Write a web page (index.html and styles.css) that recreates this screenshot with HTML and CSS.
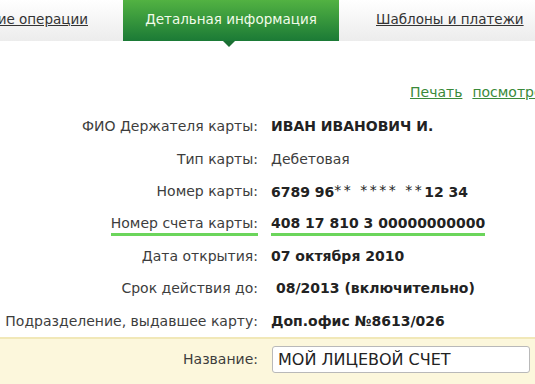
FILE: index.html
```html
<!DOCTYPE html>
<html lang="ru">
<head>
  <meta charset="UTF-8">
  <title>Детальная информация</title>
  <link rel="stylesheet" href="styles.css">
</head>
<body>

  <!-- Вкладки -->
  <div class="tabs">
    <div class="tab tab-first"><a href="#">Последние операции</a></div>
    <div class="tab tab-active">Детальная информация</div>
    <div class="tab tab-last"><a href="#">Шаблоны и платежи</a></div>
  </div>

  <!-- Ссылки -->
  <div class="links">
    <a href="#">Печать</a>
    <a href="#">посмотреть</a>
  </div>

  <!-- Данные карты -->
  <div class="info">
    <div class="label">ФИО Держателя карты:</div>
    <div class="value">ИВАН ИВАНОВИЧ И.</div>

    <div class="label">Тип карты:</div>
    <div class="value plain">Дебетовая</div>

    <div class="label">Номер карты:</div>
    <div class="value">6789 96<span class="stars">** **** **</span>12 34</div>

    <div class="label"><span class="mark">Номер счета карты:</span></div>
    <div class="value"><span class="mark">408 17 810 3 00000000000</span></div>

    <div class="label">Дата открытия:</div>
    <div class="value">07 октября 2010</div>

    <div class="label">Срок действия до:</div>
    <div class="value shift">08/2013 (включительно)</div>

    <div class="label">Подразделение, выдавшее карту:</div>
    <div class="value">Доп.офис №8613/026</div>
  </div>

  <!-- Название -->
  <div class="name-row">
    <label class="name-label" for="name">Название:</label>
    <input class="name-input" id="name" type="text" value="МОЙ ЛИЦЕВОЙ СЧЕТ">
  </div>

</body>
</html>
```

FILE: styles.css
```css
html, body {
  margin: 0;
  padding: 0;
  background: #fff;
  font-family: 'DejaVu Sans', Verdana, sans-serif;
  color: #3d3d3d;
  overflow: hidden;
}

a {
  color: inherit;
}

/* Вкладки */
.tabs {
  display: flex;
  height: 41px;
  background: linear-gradient(to bottom, #ffffff, #ececec);
  font-size: 13.5px;
}

.tab {
  display: flex;
  align-items: center;
  padding-bottom: 4px;
  white-space: nowrap;
}

.tab a {
  color: #333;
}

.tab-first {
  width: 88px;
  justify-content: flex-end;
  margin-right: 35px;
}

.tab-active {
  position: relative;
  width: 216px;
  justify-content: center;
  color: #f2fbe9;
  background: linear-gradient(to bottom, #52b242, #1b7a36);
}

.tab-active::after {
  content: "";
  position: absolute;
  left: 100px;
  bottom: -6px;
  border-left: 6px solid transparent;
  border-right: 6px solid transparent;
  border-top: 6px solid #1b6f33;
}

.tab-last {
  margin-left: 37px;
}

/* Ссылки */
.links {
  display: flex;
  justify-content: flex-end;
  gap: 10px;
  margin: 43px -24px 0 0;
  font-size: 14px;
  color: #3a8a3a;
  white-space: nowrap;
}

/* Данные карты */
.info {
  display: grid;
  grid-template-columns: 258px auto;
  column-gap: 13px;
  grid-auto-rows: 32.4px;
  align-items: center;
  margin-top: 10px;
  font-size: 14px;
}

.label {
  text-align: right;
  white-space: nowrap;
}

.value {
  font-weight: bold;
  color: #222;
  white-space: nowrap;
  font-size: 14px;
}

.value.plain {
  font-weight: normal;
  color: #3d3d3d;
}

.value.shift {
  padding-left: 5px;
}

.stars {
  font-size: 14px;
  font-weight: normal;
  letter-spacing: 2.5px;
  vertical-align: 2px;
}

.mark {
  display: inline-block;
  border-bottom: 3px solid #6bd55b;
  padding-bottom: 2px;
  margin-bottom: -5px;
}

/* Название */
.name-row {
  display: flex;
  align-items: flex-start;
  gap: 14px;
  height: 47px;
  padding-top: 7px;
  box-sizing: border-box;
  background: #fcf7dc;
  border-top: 2px solid #f1e8b8;
}

.name-label {
  width: 258px;
  flex-shrink: 0;
  line-height: 27px;
  text-align: right;
  font-size: 14px;
  color: #3d3d3d;
}

.name-input {
  width: 246px;
  height: 25px;
  padding: 0 5px;
  border: 1px solid #b9b9b9;
  border-radius: 3px;
  background: #fff;
  font-family: 'DejaVu Sans', Verdana, sans-serif;
  font-size: 16px;
  color: #222;
  box-sizing: content-box;
}
```
